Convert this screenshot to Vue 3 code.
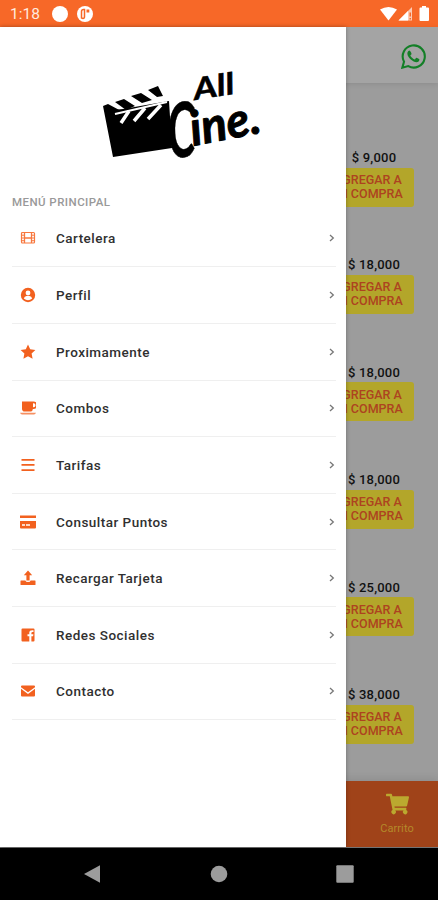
<script setup>
const items = [
  { icon: 'film', label: 'Cartelera' },
  { icon: 'user', label: 'Perfil' },
  { icon: 'star', label: 'Proximamente' },
  { icon: 'cup', label: 'Combos' },
  { icon: 'bars', label: 'Tarifas' },
  { icon: 'card', label: 'Consultar Puntos' },
  { icon: 'upload', label: 'Recargar Tarjeta' },
  { icon: 'facebook', label: 'Redes Sociales' },
  { icon: 'mail', label: 'Contacto' },
]
const prices = ['9,000', '18,000', '18,000', '18,000', '25,000', '38,000']
</script>

<template>
  <div class="phone">
    <header class="status">
      <span class="time">1:18</span>
      <svg class="dot" viewBox="0 0 16 16"><circle cx="8" cy="8" r="8" /></svg>
      <svg class="dot" viewBox="0 0 16 16">
        <circle cx="8" cy="8" r="8" />
        <path d="M4.500 12V5.500Q4.500 3.500 6.500 3.500H7.500V10.500Q7.500 12.500 6 12.500Z" fill="none" stroke="#f76828" stroke-width="1.500" />
        <path d="M9.500 3.500h2.800v3H9.500z" fill="#f76828" />
      </svg>
      <svg class="signals" viewBox="0 0 50 16">
        <path d="M0 3.500Q8.500 -1.500 17 3.500L8.500 14.500Z" />
        <path d="M32 1V14.500H18.500Z" opacity=".65" />
        <path d="M28 5V14.500H18.500Z" />
        <path d="M29.500 6.500h1.500v4h-1.500zM29.500 12h1.500v1.500h-1.500z" fill="#f76828" />
        <path d="M42 0h4v1.500h2q1 0 1 1V14q0 1-1 1H40.500q-1 0-1-1V2.500q0-1 1-1H42z" />
      </svg>
    </header>

    <main class="stage">
      <section class="page">
        <div class="topbar">
          <svg class="whatsapp" viewBox="0 0 24 24">
            <path d="M1.300 22.700L2.900 17A10.600 10.600 0 1 1 7 21.200Z" fill="none" stroke="#137f27" stroke-width="2" />
            <path d="M8 6.300c-.4 0-1.900.9-1.900 2.900 0 2.100 1.700 4.200 3.300 5.700 1.700 1.500 3.900 2.600 5.400 2.600 1.700 0 2.900-1.200 2.900-2.600 0-.4-2.400-1.700-2.900-1.700s-1.100 1.600-1.600 1.600c-1 0-4.200-2.700-4.200-3.700 0-.5 1.100-1 1.100-1.600S9 6.300 8 6.300z" fill="#137f27" />
          </svg>
        </div>
        <div class="products">
          <div v-for="(price, i) in prices" :key="i" class="product">
            <div class="price">$ {{ price }}</div>
            <button class="add">AGREGAR A<br />MI COMPRA</button>
          </div>
        </div>
        <div class="tabbar">
          <div class="cart">
            <svg viewBox="0 0 576 512"><path d="M528 301l47-208c3-15-8-29-23-29H159l-9-45C148 8 138 0 126 0H24C11 0 0 11 0 24v16c0 13 11 24 24 24h70l70 343a56 56 0 1 0 67 9h210a56 56 0 1 0 64-10l5-25c4-15-8-29-23-29H218l-6-32h293c11 0 21-8 23-19z" /></svg>
            <span>Carrito</span>
          </div>
        </div>
      </section>

      <aside class="drawer">
        <svg class="logo" viewBox="0 0 180 110">
          <path d="M8 46L18 50L28 49L74 41L77 88L18 97Z" />
          <path d="M8 46L13 44L28 52L19 58Z" />
          <path d="M20 42L29 39L40 46L31 50ZM36 36L46 33L57 40L47 43ZM53 30L63 26L68 36L62 37Z" />
          <path d="M26 63L34 51M39 61L50 48M53 59L66 45" fill="none" stroke="#fff" stroke-width="3.500" />
          <path d="M20 54L72 42" stroke="#fff" stroke-width="2" />
          <text class="all" transform="translate(100 40) rotate(-9)" textLength="41" lengthAdjust="spacingAndGlyphs">All</text>
          <text class="initial" transform="translate(74 98) rotate(-4)" textLength="28" lengthAdjust="spacingAndGlyphs">C</text>
          <text class="cine" transform="translate(98 86) rotate(-11)" textLength="71" lengthAdjust="spacingAndGlyphs">ine.</text>
        </svg>
        <h2>MENÚ PRINCIPAL</h2>
        <nav>
          <a v-for="item in items" :key="item.label" class="row">
            <svg class="icon" viewBox="0 0 16 16">
              <g v-if="item.icon === 'film'" fill="none" stroke="#f7783f">
                <rect x="1.500" y="2.500" width="13" height="10.500" rx="1" stroke-width="1.200" />
                <path d="M4.500 2.500v10.500M11.500 2.500v10.500M4.500 8h7" stroke-width="1.300" />
                <path d="M1.500 5.200h3M1.500 8h3M1.500 10.700h3M11.500 5.200h3M11.500 8h3M11.500 10.700h3" />
              </g>
              <g v-else-if="item.icon === 'user'">
                <circle cx="8" cy="8" r="7.200" />
                <circle cx="8" cy="6" r="2.400" fill="#fff" />
                <path d="M3.800 11.500Q4.500 9 6.500 9H9.500Q11.500 9 12.200 11.500Q8 15 3.800 11.500Z" fill="#fff" />
              </g>
              <path v-else-if="item.icon === 'star'" d="M8 .6l2.200 4.700 5.200.7-3.800 3.600 1 5.200L8 12.300l-4.600 2.500 1-5.200L.6 6l5.200-.7z" />
              <g v-else-if="item.icon === 'cup'">
                <path d="M2 1.500H13.500a3.700 3.700 0 0 1 0 7.400h-.7A2.800 2.800 0 0 1 10 11.500H4.800a2.800 2.800 0 0 1-2.800-2.800ZM13 3.200v4h.5a2 2 0 0 0 0-4z" />
                <path d="M0 12.700h16q-.6 1.700-2 1.700H2Q.6 14.400 0 12.700z" opacity=".7" />
              </g>
              <path v-else-if="item.icon === 'bars'" d="M1.500 2h13v1.700h-13zM1.500 7.100h13v1.700h-13zM1.500 12.200h13v1.700h-13z" />
              <g v-else-if="item.icon === 'card'">
                <path d="M0 1.500h16v2.500H0zM0 7h16v6.500q0 1-1 1H1q-1 0-1-1z" />
                <path d="M2 11h3M6 11h4" stroke="#fff" stroke-width="1.500" />
              </g>
              <path v-else-if="item.icon === 'upload'" d="M8 .5L12.200 5.300H9.600V10.500H6.400V5.300H3.800ZM1 10.500h4.400q.3 1.500 2.600 1.500t2.600-1.500H15q.5 0 .5.500v3.500q0 .5-.5.500H1q-.5 0-.5-.500V11q0-.500.5-.500z" />
              <path v-else-if="item.icon === 'facebook'" d="M2.500 1.500h11q1 0 1 1v11q0 1-1 1H11.400V9.300h1.700l.3-2.100h-2V6q0-1 1.100-1h1V3.200Q9.300 2.700 9.300 5.600v1.600H7.500v2.100h1.800v5.200H2.500q-1 0-1-1v-11q0-1 1-1z" />
              <path v-else d="M2 2.500h12q1 0 1 1v.7L8 9.300 1 4.200v-.7q0-1 1-1zM1 5.700l7 5.200 7-5.200v6.800q0 1-1 1H2q-1 0-1-1z" />
            </svg>
            <span class="label">{{ item.label }}</span>
            <svg class="chevron" viewBox="0 0 6 8"><path d="M1 1l3.300 3L1 7" /></svg>
          </a>
        </nav>
      </aside>
    </main>

    <footer class="system">
      <svg viewBox="0 0 20 20"><path d="M2 10L18 1.300V18.700Z" /></svg>
      <svg viewBox="0 0 20 20"><circle cx="10" cy="10" r="8.300" /></svg>
      <svg viewBox="0 0 20 20"><rect x="1.300" y="1.300" width="17.400" height="17.400" rx="1" /></svg>
    </footer>
  </div>
</template>

<style>
body { margin: 0; }
</style>

<style scoped>
.phone {
  display: flex;
  flex-direction: column;
  width: 438px;
  height: 900px;
  overflow: hidden;
  font-family: Roboto, sans-serif;
}
.status {
  display: flex;
  align-items: center;
  flex: 0 0 27px;
  box-sizing: border-box;
  padding: 1px 8px 0 10px;
  background: #f76828;
}
.time { width: 42px; font-size: 15.500px; color: #ffeadf; }
.dot { width: 16px; height: 16px; margin-right: 9px; fill: #fff; }
.signals { width: 50px; height: 16px; margin-left: auto; fill: #fff; }
.stage { position: relative; flex: 0 0 820px; height: 820px; min-height: 0; }
.page {
  display: flex;
  flex-direction: column;
  height: 820px;
  background: #9c9c9c;
}
.topbar {
  display: flex;
  flex: 0 0 56px;
  justify-content: flex-end;
  align-items: center;
  box-sizing: border-box;
  padding: 2px 12px 0 0;
  background: #a4a4a4;
  box-shadow: 0 1px 5px rgba(0, 0, 0, 0.1);
}
.whatsapp { width: 25px; height: 25px; }
.products {
  display: flex;
  flex: 1;
  min-height: 0;
  flex-direction: column;
  align-items: flex-end;
  box-sizing: border-box;
  padding: 65px 24.500px 0 0;
}
.product {
  display: flex;
  flex: 0 0 107.450px;
  flex-direction: column;
  align-items: flex-end;
}
.price {
  width: 79px;
  height: 19.500px;
  line-height: 19px;
  font-size: 13px;
  font-weight: 500;
  letter-spacing: 0.2px;
  text-align: center;
  white-space: nowrap;
  color: #111;
}
.add {
  width: 91px;
  height: 39px;
  padding: 0;
  border: 0;
  border-radius: 3px;
  background: #b3a62a;
  color: #ad4320;
  font: 500 12.500px/14px Roboto, sans-serif;
  white-space: nowrap;
}
.tabbar {
  display: flex;
  flex: 0 0 66px;
  justify-content: flex-end;
  background: #a04319;
  box-shadow: 0 -2px 8px rgba(0, 0, 0, 0.1);
}
.cart {
  display: flex;
  flex-direction: column;
  align-items: center;
  width: 82px;
  padding-top: 12px;
  color: #b4892a;
  font-size: 11px;
}
.cart svg { width: 23px; height: 22px; fill: #bba92f; }
.cart span { margin-top: 6px; line-height: 15px; letter-spacing: 0.1px; }
.drawer {
  position: absolute;
  top: 0;
  left: 0;
  width: 346px;
  height: 100%;
  background: #fff;
  box-shadow: 0 0 4px rgba(0, 0, 0, 0.3);
}
.logo { display: block; width: 180px; height: 110px; margin: 33px 0 0 95px; overflow: visible; }
.logo text {
  font-family: Lato, sans-serif;
  font-style: italic;
  font-weight: bold;
  stroke: #000;
  stroke-width: 0.5px;
  stroke-linejoin: round;
}
.logo .all { font-size: 30px; }
.logo .initial { font-size: 76px; }
.logo .cine { font-size: 48px; stroke-width: 1px; }
h2 {
  margin: 25px 0 0 12px;
  font-size: 11.500px;
  font-weight: 500;
  line-height: 14px;
  letter-spacing: 0.450px;
  color: #999;
}
nav { display: flex; flex-direction: column; margin: 1.700px 10px 0 12px; }
.row {
  display: flex;
  align-items: center;
  box-sizing: border-box;
  height: 56.620px;
  padding: 0 1px 0 8px;
  border-bottom: 1px solid #efefef;
}
.icon { width: 16px; height: 16px; fill: #f2611f; }
.label {
  flex: 1;
  margin-left: 20px;
  font-size: 13.500px;
  font-weight: 500;
  letter-spacing: 0.480px;
  color: #303030;
}
.chevron { width: 6px; height: 8px; fill: none; stroke: #777; stroke-width: 1.3; }
.system {
  display: flex;
  flex: 1;
  align-items: center;
  justify-content: space-between;
  padding: 0 83px 0 82px;
  background: #000;
  border-top: 1px solid #777;
}
.system svg { width: 20px; height: 20px; fill: #9c9c9c; }
</style>
